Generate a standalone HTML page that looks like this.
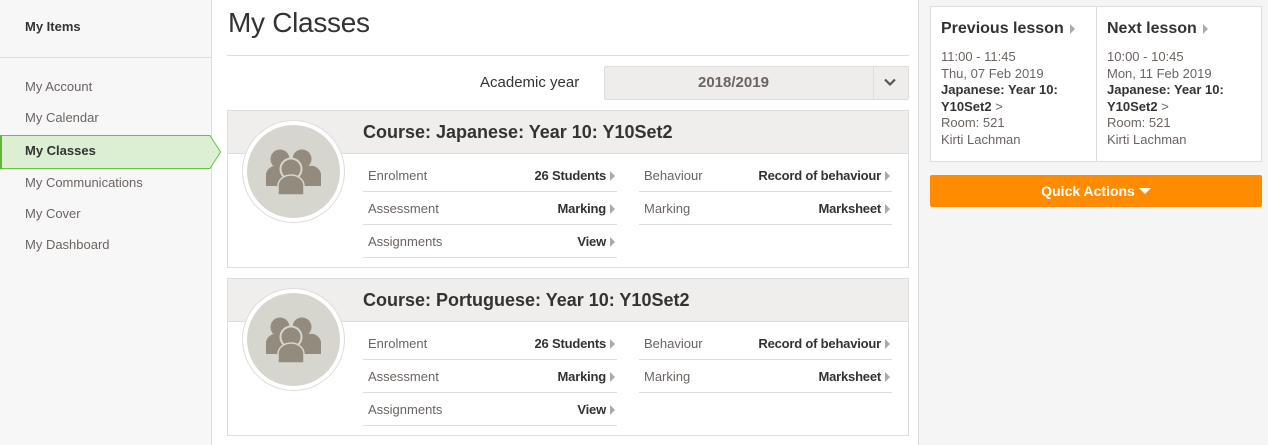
<!DOCTYPE html>
<html><head><style>
*{box-sizing:border-box;margin:0;padding:0}
body{width:1268px;height:445px;overflow:hidden;background:#fff;font-family:"Liberation Sans",sans-serif;color:#333;position:relative}
.a{position:absolute}
.side{left:0;top:0;width:212px;height:445px;background:#f7f7f7;border-right:1px solid #ddd}
.nav{left:25px;font-size:13px;color:#6b6461}
.right{left:918px;top:0;width:350px;height:445px;background:#f5f5f5;border-left:1px solid #ddd}
.card{left:227px;width:682px;height:158px;border:1px solid #ddd;background:#fff}
.ch{left:0;top:0;width:680px;height:43px;background:#efeeec;border-bottom:1px solid #ddd}
.ct{left:135px;top:11px;font-size:18px;font-weight:bold;color:#333}
.circ{left:15px;top:10px;width:101px;height:101px;border-radius:50%;background:#d6d6cf;border:4px solid #fff;box-shadow:0 0 0 1px #ddd}
.row{height:33px;border-bottom:1px solid #ddd;font-size:13px;color:#6b6461}
.row span.l{position:absolute;left:5px;top:9px}
.row span.r{position:absolute;right:2px;top:9px;font-weight:bold;color:#333;letter-spacing:-0.2px}
.tri{display:inline-block;width:0;height:0;border-left:5px solid #aaa;border-top:5px solid transparent;border-bottom:5px solid transparent;margin-left:4px;vertical-align:-1px}
.ls{font-size:13px;color:#6b6461;line-height:16.5px}
</style></head><body>
<div class="a side"></div>
<div class="a" style="left:25px;top:19px;font-size:13px;font-weight:bold;color:#333">My Items</div>
<div class="a" style="left:0;top:57px;width:211px;height:1px;background:#ddd"></div>
<div class="a nav" style="top:79px">My Account</div>
<div class="a nav" style="top:110px">My Calendar</div>
<svg class="a" style="left:0;top:135px" width="222" height="35"><path d="M0.5 0.5H210L220.5 17L210 33.5H0.5Z" fill="#dcefd3" stroke="#6cbf4a"/><rect x="0" y="0" width="2" height="34" fill="#5cb83a"/></svg>
<div class="a nav" style="top:143px;font-weight:bold;color:#333">My Classes</div>
<div class="a nav" style="top:175px">My Communications</div>
<div class="a nav" style="top:206px">My Cover</div>
<div class="a nav" style="top:237px">My Dashboard</div>

<div class="a" style="left:228px;top:7px;font-size:28px;color:#333;letter-spacing:-0.3px">My Classes</div>
<div class="a" style="left:227px;top:55px;width:682px;height:1px;background:#ddd"></div>
<div class="a" style="left:480px;top:74px;font-size:15px;color:#333">Academic year</div>
<div class="a" style="left:604px;top:66px;width:305px;height:34px;background:#eeedeb;border:1px solid #ddd;border-radius:2px"></div>
<div class="a" style="left:873px;top:67px;width:1px;height:32px;background:#ddd"></div>
<div class="a" style="left:698px;top:74px;font-size:15px;font-weight:bold;color:#6b6461">2018/2019</div>
<svg class="a" style="left:884px;top:78px" width="12" height="9"><path d="M1 1.5L6 6.5L11 1.5" fill="none" stroke="#555" stroke-width="2.2"/></svg>

<div class="a card" style="top:110px">
 <div class="a ch"></div><div class="a ct">Course: Japanese: Year 10: Y10Set2</div>
 <div class="a circ"><svg width="93" height="93" viewBox="0 0 93 93"><g fill="#938b7d"><circle cx="33" cy="34" r="9.5"/><path d="M19 61v-12a10 10 0 0 1 12-8h10v20z"/><circle cx="55" cy="34" r="9.5"/><path d="M52 41h10a10 10 0 0 1 12 8v12H52z"/><circle cx="44" cy="44" r="10.5" stroke="#d6d6cf" stroke-width="2"/><path d="M31 70v-9a13 11 0 0 1 26 0v9z" stroke="#d6d6cf" stroke-width="1.5"/></g></svg></div>
 <div class="a" style="left:135px;top:48px;width:254px">
  <div class="row" style="position:relative"><span class="l">Enrolment</span><span class="r">26 Students<i class="tri"></i></span></div>
  <div class="row" style="position:relative"><span class="l">Assessment</span><span class="r">Marking<i class="tri"></i></span></div>
  <div class="row" style="position:relative"><span class="l">Assignments</span><span class="r">View<i class="tri"></i></span></div>
 </div>
 <div class="a" style="left:411px;top:48px;width:253px">
  <div class="row" style="position:relative"><span class="l">Behaviour</span><span class="r">Record of behaviour<i class="tri"></i></span></div>
  <div class="row" style="position:relative"><span class="l">Marking</span><span class="r">Marksheet<i class="tri"></i></span></div>
 </div>
</div>
<div class="a card" style="top:278px">
 <div class="a ch"></div><div class="a ct">Course: Portuguese: Year 10: Y10Set2</div>
 <div class="a circ"><svg width="93" height="93" viewBox="0 0 93 93"><g fill="#938b7d"><circle cx="33" cy="34" r="9.5"/><path d="M19 61v-12a10 10 0 0 1 12-8h10v20z"/><circle cx="55" cy="34" r="9.5"/><path d="M52 41h10a10 10 0 0 1 12 8v12H52z"/><circle cx="44" cy="44" r="10.5" stroke="#d6d6cf" stroke-width="2"/><path d="M31 70v-9a13 11 0 0 1 26 0v9z" stroke="#d6d6cf" stroke-width="1.5"/></g></svg></div>
 <div class="a" style="left:135px;top:48px;width:254px">
  <div class="row" style="position:relative"><span class="l">Enrolment</span><span class="r">26 Students<i class="tri"></i></span></div>
  <div class="row" style="position:relative"><span class="l">Assessment</span><span class="r">Marking<i class="tri"></i></span></div>
  <div class="row" style="position:relative"><span class="l">Assignments</span><span class="r">View<i class="tri"></i></span></div>
 </div>
 <div class="a" style="left:411px;top:48px;width:253px">
  <div class="row" style="position:relative"><span class="l">Behaviour</span><span class="r">Record of behaviour<i class="tri"></i></span></div>
  <div class="row" style="position:relative"><span class="l">Marking</span><span class="r">Marksheet<i class="tri"></i></span></div>
 </div>
</div>

<div class="a right"></div>
<div class="a" style="left:930px;top:6px;width:332px;height:156px;background:#fff;border:1px solid #ddd"></div>
<div class="a" style="left:1096px;top:7px;width:1px;height:154px;background:#ddd"></div>
<div class="a" style="left:941px;top:19px;font-size:16px;font-weight:bold;color:#333;line-height:20px">Previous lesson<i class="tri" style="margin-left:6px"></i></div>
<div class="a" style="left:1107px;top:19px;font-size:16px;font-weight:bold;color:#333;line-height:20px">Next lesson<i class="tri" style="margin-left:6px"></i></div>
<div class="a ls" style="left:941px;top:49px">11:00 - 11:45<br>Thu, 07 Feb 2019<br><b style="color:#333">Japanese: Year 10:<br>Y10Set2</b> &gt;<br>Room: 521<br>Kirti Lachman</div>
<div class="a ls" style="left:1107px;top:49px">10:00 - 10:45<br>Mon, 11 Feb 2019<br><b style="color:#333">Japanese: Year 10:<br>Y10Set2</b> &gt;<br>Room: 521<br>Kirti Lachman</div>
<div class="a" style="left:930px;top:175px;width:332px;height:32px;background:#ff8c00;border-radius:2px;color:#fff;font-size:14px;font-weight:bold;text-align:center;line-height:32px">Quick Actions <span style="display:inline-block;width:0;height:0;border-top:6px solid #fff;border-left:6px solid transparent;border-right:6px solid transparent;vertical-align:2px"></span></div>
</body></html>
